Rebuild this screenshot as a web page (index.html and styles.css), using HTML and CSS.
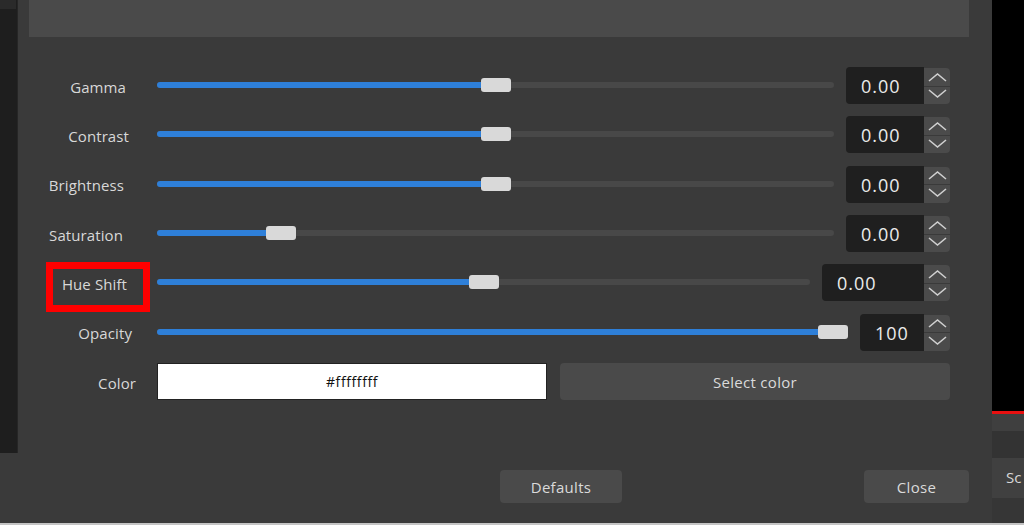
FILE: index.html
```html
<!DOCTYPE html>
<html>
<head>
<meta charset="utf-8">
<link rel="stylesheet" href="styles.css">
</head>
<body>
<div class="screen">
  <div class="side-left">
    <div class="side-left-panel"><div class="side-left-tab"></div></div>
  </div>
  <div class="dialog">
    <div class="preview"></div>
    <div class="form">
      <div class="row">
        <div class="label pr-18">Gamma</div>
        <div class="slider" style="--v:0.5"><div class="track"><div class="fill"></div><div class="handle"></div></div></div>
        <div class="spin"><div class="spin-value w-78">0.00</div><div class="spin-btns"><div class="spin-btn"><svg width="26" height="18" viewBox="0 0 26 18"><polyline points="5,13 13.5,6 22,13" /></svg></div><div class="spin-btn"><svg width="26" height="18" viewBox="0 0 26 18"><polyline points="5,4 13.5,11 22,4" /></svg></div></div></div>
      </div>
      <div class="row">
        <div class="label pr-15">Contrast</div>
        <div class="slider" style="--v:0.5"><div class="track"><div class="fill"></div><div class="handle"></div></div></div>
        <div class="spin"><div class="spin-value w-78">0.00</div><div class="spin-btns"><div class="spin-btn"><svg width="26" height="18" viewBox="0 0 26 18"><polyline points="5,13 13.5,6 22,13" /></svg></div><div class="spin-btn"><svg width="26" height="18" viewBox="0 0 26 18"><polyline points="5,4 13.5,11 22,4" /></svg></div></div></div>
      </div>
      <div class="row">
        <div class="label pr-20">Brightness</div>
        <div class="slider" style="--v:0.5"><div class="track"><div class="fill"></div><div class="handle"></div></div></div>
        <div class="spin"><div class="spin-value w-78">0.00</div><div class="spin-btns"><div class="spin-btn"><svg width="26" height="18" viewBox="0 0 26 18"><polyline points="5,13 13.5,6 22,13" /></svg></div><div class="spin-btn"><svg width="26" height="18" viewBox="0 0 26 18"><polyline points="5,4 13.5,11 22,4" /></svg></div></div></div>
      </div>
      <div class="row">
        <div class="label pr-21">Saturation</div>
        <div class="slider" style="--v:0.168"><div class="track"><div class="fill"></div><div class="handle"></div></div></div>
        <div class="spin"><div class="spin-value w-78">0.00</div><div class="spin-btns"><div class="spin-btn"><svg width="26" height="18" viewBox="0 0 26 18"><polyline points="5,13 13.5,6 22,13" /></svg></div><div class="spin-btn"><svg width="26" height="18" viewBox="0 0 26 18"><polyline points="5,4 13.5,11 22,4" /></svg></div></div></div>
      </div>
      <div class="row">
        <div class="label pr-17">Hue Shift<span class="highlight"></span></div>
        <div class="slider" style="--v:0.5"><div class="track"><div class="fill"></div><div class="handle"></div></div></div>
        <div class="spin"><div class="spin-value w-102">0.00</div><div class="spin-btns"><div class="spin-btn"><svg width="26" height="18" viewBox="0 0 26 18"><polyline points="5,13 13.5,6 22,13" /></svg></div><div class="spin-btn"><svg width="26" height="18" viewBox="0 0 26 18"><polyline points="5,4 13.5,11 22,4" /></svg></div></div></div>
      </div>
      <div class="row">
        <div class="label pr-12">Opacity</div>
        <div class="slider" style="--v:1"><div class="track"><div class="fill"></div><div class="handle"></div></div></div>
        <div class="spin"><div class="spin-value w-64">100</div><div class="spin-btns"><div class="spin-btn"><svg width="26" height="18" viewBox="0 0 26 18"><polyline points="5,13 13.5,6 22,13" /></svg></div><div class="spin-btn"><svg width="26" height="18" viewBox="0 0 26 18"><polyline points="5,4 13.5,11 22,4" /></svg></div></div></div>
      </div>
      <div class="row">
        <div class="label pr-8">Color</div>
        <div class="color-box">#ffffffff</div>
        <button class="btn btn-select">Select color</button>
      </div>
    </div>
    <div class="footer">
      <button class="btn btn-defaults">Defaults</button>
      <button class="btn btn-close">Close</button>
    </div>
  </div>
  <div class="side-right">
    <div class="sr-black"></div>
    <div class="sr-red"></div>
    <div class="sr-a"></div>
    <div class="sr-b"></div>
    <div class="sr-c">Sc</div>
    <div class="sr-d"></div>
  </div>
</div>
<div class="bottom-line"></div>
</body>
</html>
```

FILE: styles.css
```css
* { box-sizing: border-box; }
html, body { margin: 0; padding: 0; }
body {
  width: 1024px;
  height: 525px;
  overflow: hidden;
  background: #3a3a3a;
  font-family: "Open Sans", "Noto Sans", sans-serif;
  color: #dadada;
}
.screen {
  display: flex;
  height: 523px;
}
.side-left {
  width: 18px;
  flex: none;
}
.side-left-panel {
  height: 453px;
  background: #1e1e1e;
  border-right: 1px solid #262626;
}
.side-left-tab {
  width: 16px;
  height: 9px;
  background: #2a2a2a;
}
.dialog {
  flex: 1;
  display: flex;
  flex-direction: column;
}
.preview {
  height: 37px;
  margin-left: 11px;
  margin-right: 21px;
  background: #4a4a4a;
}
.form {
  margin-top: 30px;
  margin-left: 11px;
  margin-right: 40px;
  display: flex;
  flex-direction: column;
  gap: 12.35px;
}
.row {
  display: flex;
  align-items: center;
  height: 37px;
}
.label {
  position: relative;
  width: 115px;
  margin-right: 13px;
  flex: none;
  text-align: right;
  font-size: 15px;
  letter-spacing: 0.1px;
  color: #d8d8d8;
  line-height: 20px;
  padding-top: 2px;
}
.pr-8 { padding-right: 8px; }
.pr-12 { padding-right: 12px; }
.pr-15 { padding-right: 15px; }
.pr-17 { padding-right: 17px; }
.pr-18 { padding-right: 18px; }
.pr-20 { padding-right: 20px; }
.pr-21 { padding-right: 21px; }
.highlight {
  position: absolute;
  left: 17px;
  top: -10px;
  width: 104px;
  height: 50px;
  border: 7px solid #ff0000;
}
.slider {
  flex: 1;
  height: 37px;
  display: flex;
  align-items: center;
  margin-right: 12px;
}
.track {
  position: relative;
  width: 100%;
  height: 6px;
  border-radius: 3px;
  background: #484848;
  margin-top: -1px;
}
.fill {
  position: absolute;
  left: 0;
  top: 0;
  height: 6px;
  border-radius: 3px;
  background: #2e7fd8;
  width: calc(var(--v) * (100% - 30px) + 15px);
}
.handle {
  position: absolute;
  top: -4px;
  left: calc(var(--v) * (100% - 30px));
  width: 30px;
  height: 14px;
  border-radius: 3px;
  background: #d9d9d9;
}
.spin {
  display: flex;
  height: 37px;
  flex: none;
}
.spin-value {
  height: 37px;
  background: #1f1f1f;
  border-radius: 4px 0 0 4px;
  padding-left: 15px;
  padding-top: 1px;
  font-size: 18px;
  letter-spacing: 1px;
  line-height: 36px;
  color: #ececec;
}
.w-64 { width: 64px; }
.w-78 { width: 78px; }
.w-102 { width: 102px; }
.spin-btns {
  width: 26px;
  display: flex;
  flex-direction: column;
  gap: 1px;
  padding-top: 1px;
}
.spin-btn {
  height: 17.5px;
  background: #4b4b4b;
  display: flex;
  align-items: center;
  justify-content: center;
  overflow: hidden;
}
.spin-btn:first-child { border-radius: 0 4px 0 0; }
.spin-btn:last-child { border-radius: 0 0 4px 0; }
.spin-btn svg { display: block; flex: none; }
.spin-btn polyline {
  fill: none;
  stroke: #cfcfcf;
  stroke-width: 1.6;
}
.color-box {
  width: 390px;
  height: 37px;
  flex: none;
  background: #ffffff;
  border: 1px solid #222222;
  text-align: center;
  font-size: 14px;
  letter-spacing: 0.6px;
  line-height: 35px;
  color: #111111;
}
.btn {
  font-family: "Open Sans", "Noto Sans", sans-serif;
  font-size: 15px;
  letter-spacing: 0.3px;
  color: #dadada;
  background: #4a4a4a;
  border: none;
  border-radius: 4px;
  padding: 0;
}
.btn-select {
  flex: 1;
  height: 37px;
  margin-left: 13px;
}
.footer {
  margin-top: 70px;
  display: flex;
  justify-content: space-between;
  padding-left: 482px;
  padding-right: 21px;
}
.btn-defaults {
  width: 122px;
  height: 33px;
}
.btn-close {
  width: 105px;
  height: 33px;
}
.side-right {
  width: 34px;
  flex: none;
  padding-left: 2px;
  display: flex;
  flex-direction: column;
}
.sr-black { height: 411px; background: #000000; }
.sr-red { height: 3px; background: #e81010; }
.sr-a { height: 17px; background: #3f3f3f; }
.sr-b { height: 27px; background: #333333; }
.sr-c {
  height: 40px;
  background: #404040;
  font-size: 15px;
  line-height: 38px;
  padding-left: 14px;
  color: #d8d8d8;
  white-space: nowrap;
  overflow: hidden;
}
.sr-d { flex: 1; background: #363636; }
.bottom-line {
  height: 2px;
  background: #c4c4c4;
}
```
